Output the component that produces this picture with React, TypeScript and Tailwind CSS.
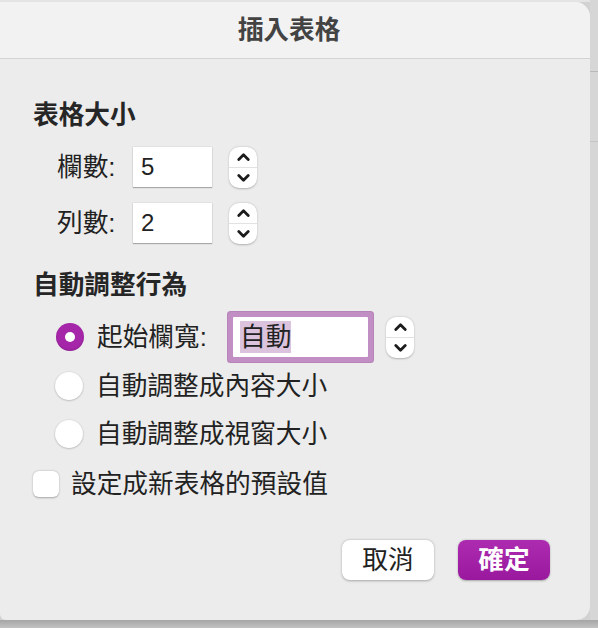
import React from "react";

const font = { fontFamily: '"Liberation Sans", "Noto Sans CJK TC", sans-serif' };

function Chevron({ up }: { up?: boolean }) {
  return (
    <svg width="13" height="8" viewBox="0 0 13 8" fill="none">
      <polyline
        points={up ? "1.8,6.4 6.5,1.8 11.2,6.4" : "1.8,1.6 6.5,6.2 11.2,1.6"}
        stroke="#1c1c1c"
        strokeWidth="2.8"
        strokeLinecap="round"
        strokeLinejoin="round"
      />
    </svg>
  );
}

function Stepper() {
  return (
    <div className="flex h-[41px] w-[28px] flex-col rounded-[10px] bg-white shadow-[0_0.5px_2px_rgba(0,0,0,0.25)]">
      <div className="flex flex-1 items-center justify-center border-b border-[#e2e2e2]">
        <Chevron up />
      </div>
      <div className="flex flex-1 items-center justify-center">
        <Chevron />
      </div>
    </div>
  );
}

function NumberRow({ label, value }: { label: string; value: string }) {
  return (
    <div className="flex h-[40px] items-center pl-[24px]">
      <div className="w-[76px] text-[25.7px] text-[#222]">{label}</div>
      <div className="flex h-[40px] w-[79px] items-center bg-white pl-[8px] text-[24px] text-[#222] shadow-[0_1px_1px_rgba(0,0,0,0.25),0_0_0_0.5px_rgba(0,0,0,0.08)]">
        {value}
      </div>
      <div className="ml-[17px]">
        <Stepper />
      </div>
    </div>
  );
}

function Radio({ checked }: { checked?: boolean }) {
  return checked ? (
    <div className="flex h-[28px] w-[28px] items-center justify-center rounded-full bg-[#a526a9] shadow-[inset_0_-1px_2px_rgba(0,0,0,0.15)]">
      <div className="h-[10px] w-[10px] rounded-full bg-white" />
    </div>
  ) : (
    <div className="h-[28px] w-[28px] rounded-full bg-white shadow-[0_0.5px_2px_rgba(0,0,0,0.3)]" />
  );
}

export default function App() {
  return (
    <div className="flex h-[628px] w-[598px] flex-col overflow-hidden bg-[#d2d2d2]" style={font}>
      <div className="flex h-[620px]">
        <div className="flex w-[590px] flex-col">
          <div className="h-[2px] bg-[#e4e4e4]" />
          <div className="flex flex-1 flex-col overflow-hidden rounded-tr-[15px] rounded-br-[14px] rounded-bl-[6px] bg-[#ececec]">
            <div className="flex h-[57px] items-center justify-center border-b border-[#d3d3d3] bg-[#f2f2f2] pr-[12px] pt-[1px] text-[25.7px] font-bold text-[#434343]">
              插入表格
            </div>
            <div className="flex flex-col px-[33px]">
              <div className="mt-[40px] h-[32px] text-[25.7px] font-bold leading-[32px] text-[#262626]">表格大小</div>
              <div className="mt-[16px] flex flex-col gap-[16px]">
                <NumberRow label="欄數:" value="5" />
                <NumberRow label="列數:" value="2" />
              </div>
              <div className="mt-[26px] h-[32px] text-[25.7px] font-bold leading-[32px] text-[#262626]">自動調整行為</div>
              <div className="mt-[11px] flex h-[50px] items-center pl-[23px]">
                <Radio checked />
                <span className="ml-[13px] w-[136px] text-[25.7px] text-[#222]">起始欄寬:</span>
                <div className="flex h-[40px] w-[135px] items-center rounded-[1px] bg-white pl-[7px] shadow-[0_0_0_5px_#c28fc4,0_0_0_6px_#b784b9]">
                  <span className="flex h-[32px] items-center bg-[#dcc3dd] text-[25.7px] text-[#222]">自動</span>
                </div>
                <div className="ml-[18px]">
                  <Stepper />
                </div>
              </div>
              <div className="flex h-[48px] items-center pl-[22px]">
                <Radio />
                <span className="ml-[13px] text-[25.7px] text-[#222]">自動調整成內容大小</span>
              </div>
              <div className="flex h-[48px] items-center pl-[22px]">
                <Radio />
                <span className="ml-[13px] text-[25.7px] text-[#222]">自動調整成視窗大小</span>
              </div>
              <div className="flex h-[52px] items-center">
                <div className="h-[26px] w-[26px] rounded-[6px] bg-white shadow-[0_0.5px_2px_rgba(0,0,0,0.3)]" />
                <span className="ml-[12px] text-[25.7px] text-[#222]">設定成新表格的預設值</span>
              </div>
              <div className="mt-[30px] flex justify-end gap-[24px] pr-[7px]">
                <button className="flex h-[40px] w-[92px] items-center justify-center rounded-[8px] bg-white text-[25.7px] text-[#222] shadow-[0_0.5px_2.5px_rgba(0,0,0,0.3)]">
                  取消
                </button>
                <button className="flex h-[40px] w-[92px] items-center justify-center rounded-[8px] bg-gradient-to-b from-[#ad2bb0] to-[#99189d] text-[25.7px] font-bold text-white shadow-[0_0.5px_2px_rgba(0,0,0,0.3)]">
                  確定
                </button>
              </div>
            </div>
          </div>
        </div>
        <div className="flex w-[8px] flex-col bg-[#d6d6d6]">
          <div className="h-[72px] border-b border-[#b8b8b8]" />
          <div className="h-[70px] border-b border-[#c4c4c4]" />
        </div>
      </div>
      <div className="h-[8px] bg-gradient-to-b from-[#a6a6a6] to-[#c2c2c2]" />
    </div>
  );
}
